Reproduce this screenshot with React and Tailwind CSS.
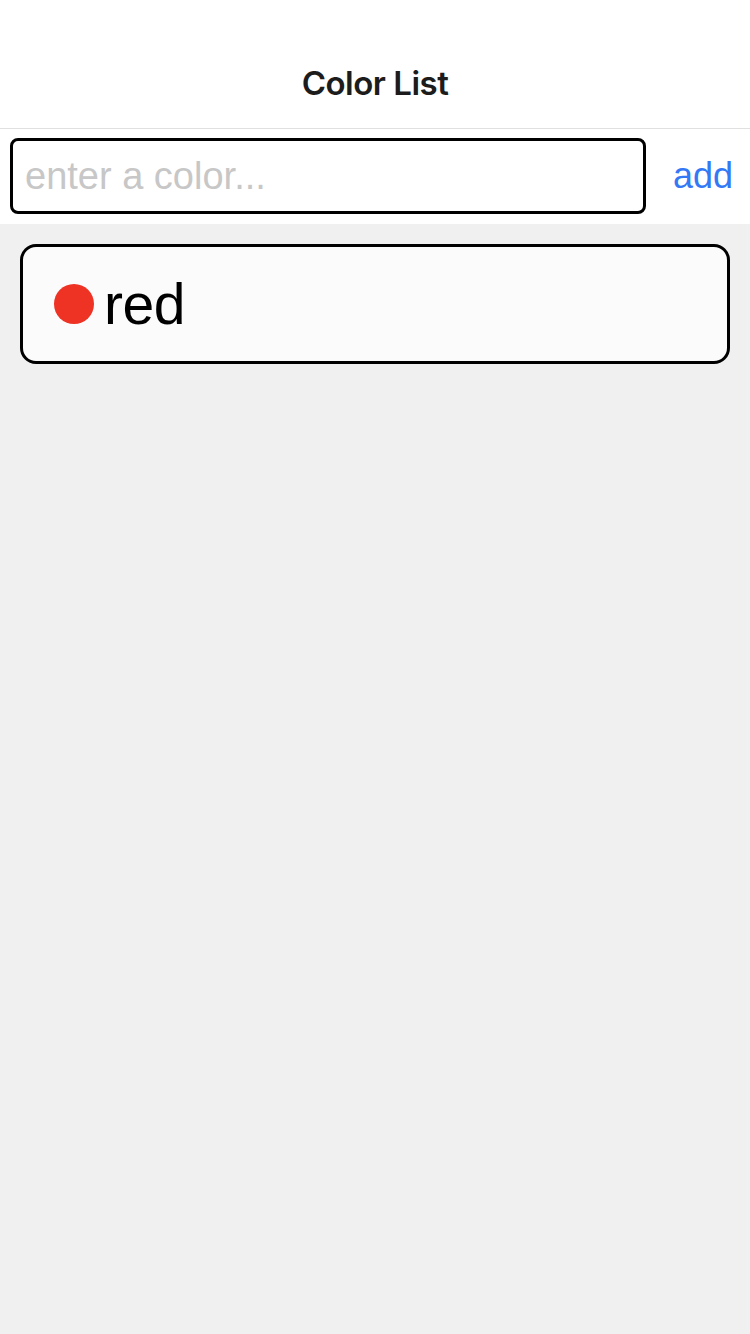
export default function App() {
  const font = { fontFamily: '"Liberation Sans", Roboto, Arial, sans-serif' };
  return (
    <div className="w-[750px] h-[1334px] bg-[#f0f0f0] flex flex-col" style={font}>
      <div className="h-[129px] bg-white border-b border-[#e0e0e0] flex items-end justify-center pb-[28px]">
        <span className="text-[33px] leading-[34px] font-semibold text-[#1c1c1c]" style={{ fontFamily: 'Inter, "Liberation Sans", sans-serif', letterSpacing: '-0.5px' }}>Color List</span>
      </div>
      <div className="bg-white h-[95px] flex items-start pt-[9px] pl-[10px]">
        <div className="w-[636px] h-[76px] border-[3px] border-black rounded-[8px] flex items-center pl-[12px]">
          <span className="text-[38px] text-[#c7c7c7]">enter a color...</span>
        </div>
        <div className="flex-1 h-[76px] flex items-center justify-end pr-[17px]">
          <span className="text-[36px] text-[#3478f6]">add</span>
        </div>
      </div>
      <div className="px-[20px] pt-[20px]">
        <div className="h-[120px] border-[3px] border-black rounded-[16px] bg-[#fbfbfb] flex items-center pl-[31px] gap-[10px]">
          <div className="w-[40px] h-[40px] rounded-full bg-[#ee3224]" />
          <span className="text-[57px] leading-none text-black" style={{ letterSpacing: '-0.5px' }}>red</span>
        </div>
      </div>
    </div>
  );
}
